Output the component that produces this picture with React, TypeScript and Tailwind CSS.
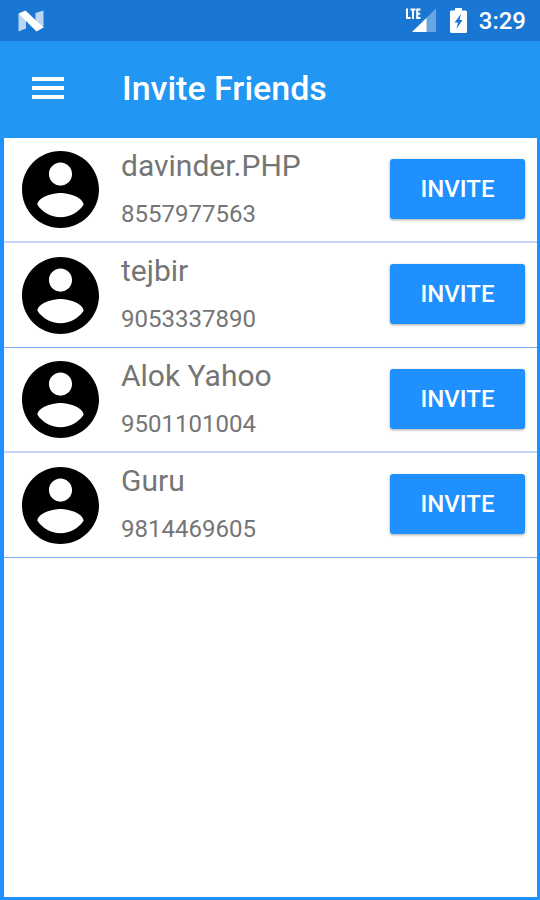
interface Friend {
  name: string;
  phone: string;
}

const friends: Friend[] = [
  { name: 'davinder.PHP', phone: '8557977563' },
  { name: 'tejbir', phone: '9053337890' },
  { name: 'Alok Yahoo', phone: '9501101004' },
  { name: 'Guru', phone: '9814469605' },
];

function NougatIcon() {
  return (
    <svg className="w-[26px] h-[22px]" viewBox="0 0 26 22" fill="white" aria-hidden="true">
      <path d="M0.500 3.500 8 8v10.500l-7.500 3z" opacity="0.7" />
      <path d="M17.500 3 25.500 0.500v17.500L17.500 13z" opacity="0.7" />
      <path d="M0.500 3.500 7.500 0.500 25.500 17.500 18.500 21.500z" />
    </svg>
  );
}

function SignalIcon() {
  return (
    <svg className="w-[31px] h-[25px]" viewBox="0 0 31 25" fill="white" aria-hidden="true">
      <path d="M31 0.500V24H7z" opacity="0.35" />
      <path d="M21.500 10v14H7z" />
      {/* LTE badge */}
      <path
        d="M2 0.500v9.500h3.500M5.500 1.500h5M8 1.500v9.500M15.500 1.500h-3.300v8.500h3.300M12.500 5.700h2.700"
        fill="none"
        stroke="white"
        strokeWidth="2"
      />
    </svg>
  );
}

function BatteryIcon() {
  return (
    <svg className="w-[17px] h-[25px]" viewBox="0 0 17 25" aria-hidden="true">
      <path
        d="M5 0h7v2.500h3.500c.8 0 1.500.7 1.500 1.500v19.500c0 .8-.7 1.500-1.500 1.500h-14C.7 25 0 24.300 0 23.500V4c0-.8.7-1.500 1.500-1.500H5z"
        fill="white"
      />
      <path d="M11 6 4.500 14.500H8L6.500 21 12.500 12H9.500z" fill="#1976d2" />
    </svg>
  );
}

function AvatarIcon() {
  return (
    <svg className="w-[77px] h-[77px] shrink-0" viewBox="2 2 20 20" aria-hidden="true">
      <path d="M12 2C6.480 2 2 6.480 2 12s4.480 10 10 10 10-4.480 10-10S17.520 2 12 2zm0 3c1.660 0 3 1.340 3 3s-1.340 3-3 3-3-1.340-3-3 1.340-3 3-3zm0 14.200c-2.500 0-4.710-1.280-6-3.220.03-1.990 4-3.080 6-3.080 1.990 0 5.970 1.090 6 3.080-1.290 1.940-3.500 3.220-6 3.220z" />
    </svg>
  );
}

function FriendRow({ name, phone }: Friend) {
  return (
    <li className="flex items-center h-[105px] pl-[18px] pr-3 odd:border-b-2 odd:border-[#c5d7fc] even:border-b even:border-[#7fb0f5]">
      <AvatarIcon />
      <div className="flex-1 min-w-0 ml-[22px] text-[#757575]">
        <p className="text-[30px] leading-10 truncate">{name}</p>
        <p className="mt-2 text-2xl leading-10 truncate">{phone}</p>
      </div>
      <button
        type="button"
        aria-label={`Invite ${name}`}
        className="w-[135px] h-[60px] mb-0.5 rounded-[3px] bg-[#1e90ff] text-2xl font-medium text-white shadow-[0_1px_3px_rgba(0,0,0,0.35)]"
      >
        INVITE
      </button>
    </li>
  );
}

export default function App() {
  return (
    <div className="flex flex-col min-h-screen bg-white font-['Roboto',sans-serif]">
      {/* Status bar */}
      <div className="flex items-center h-[41px] pl-[18px] pr-[14px] bg-[#1976d2] text-white">
        <NougatIcon />
        <div className="flex items-center ml-auto">
          <SignalIcon />
          <span className="ml-[14px]">
            <BatteryIcon />
          </span>
          <span className="ml-3 text-2xl font-medium">3:29</span>
        </div>
      </div>

      {/* App bar */}
      <header className="flex items-center h-[97px] px-8 pb-0.5 bg-[#2196f3] text-white">
        <button type="button" aria-label="Open menu">
          <svg className="w-8 h-6" viewBox="0 0 32 24" fill="white" aria-hidden="true">
            <path d="M0 0h32v4H0zM0 9h32v4H0zM0 18h32v4H0z" />
          </svg>
        </button>
        <h1 className="ml-[58px] text-[34px] font-medium">Invite Friends</h1>
      </header>

      <main className="flex-1 border-l-4 border-r-[3px] border-b-[3px] border-[#1e90ff]">
        <ul>
          {friends.map((friend) => (
            <FriendRow key={friend.phone} {...friend} />
          ))}
        </ul>
      </main>
    </div>
  );
}
